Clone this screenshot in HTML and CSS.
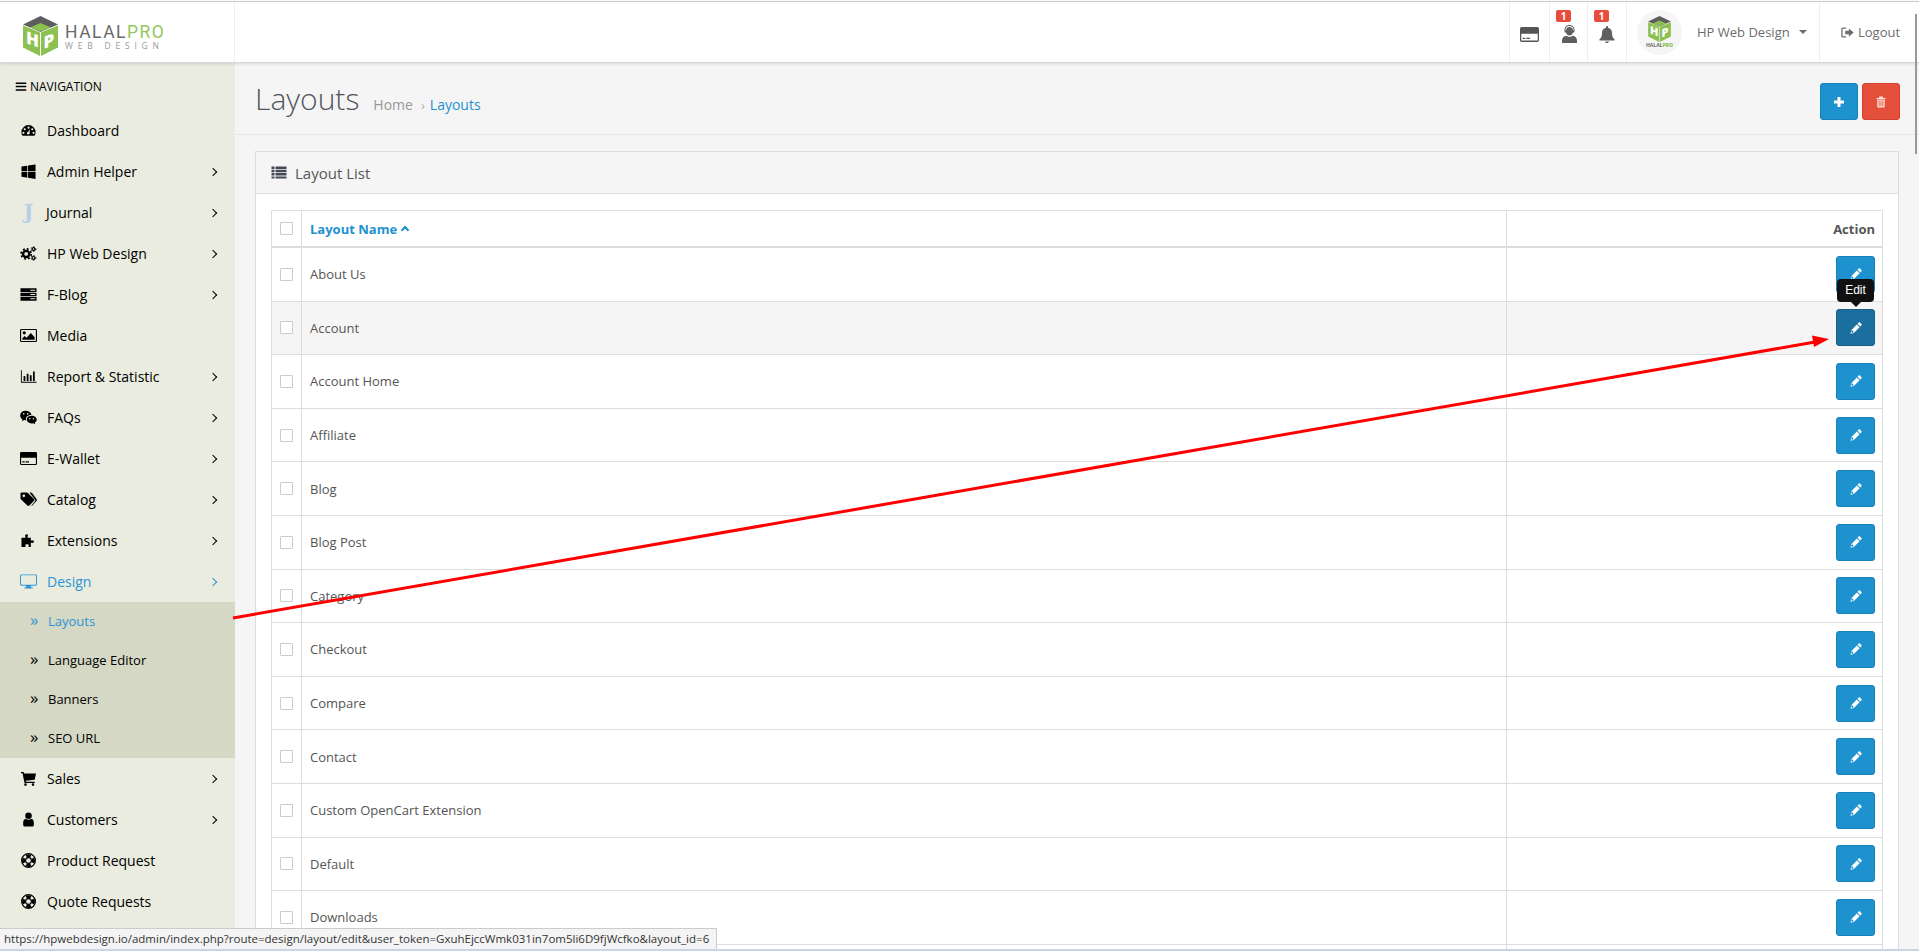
FILE: index.html
```html
<!DOCTYPE html>
<html lang="en">
<head>
<meta charset="utf-8">
<title>Layouts</title>
<link rel="stylesheet" href="styles.css">
</head>
<body>
<svg class="defs" width="0" height="0" aria-hidden="true">
  <symbol id="i-bars" viewBox="0 0 16 14"><path d="M1 1.5h14v2H1zM1 6h14v2H1zM1 10.500h14v2H1z"/></symbol>
  <symbol id="i-dash" viewBox="0 0 18 18"><path fill-rule="evenodd" d="M9 2.500a8.500 8.500 0 0 1 8.500 8.500c0 1.700-.4 3-1.300 4.300H1.800C.9 14 .5 12.700.5 11A8.500 8.500 0 0 1 9 2.500zM9 4.300a1.300 1.300 0 1 0 0 2.600 1.300 1.300 0 0 0 0-2.600zM4.500 6.200a1.300 1.300 0 1 0 0 2.600 1.300 1.300 0 0 0 0-2.600zM13.500 6.200a1.300 1.300 0 1 0 0 2.600 1.300 1.300 0 0 0 0-2.600zM2.900 10.500a1.300 1.300 0 1 0 0 2.600 1.300 1.300 0 0 0 0-2.600zM15.100 10.500a1.300 1.300 0 1 0 0 2.600 1.300 1.300 0 0 0 0-2.600zM11.200 7.200L8.700 10.400a1.700 1.700 0 1 0 1.500.7z"/></symbol>
  <symbol id="i-win" viewBox="0 0 16 16"><path d="M.5 2.700l6.200-.9v6H.5zM7.500 1.700l8-1.200v7.300h-8zM.5 8.600h6.200v6l-6.200-.9zM7.500 8.600h8v7.300l-8-1.200z"/></symbol>
  <symbol id="i-cogs" viewBox="0 0 18 16">
    <g class="icon-line">
      <circle cx="6.500" cy="8.500" r="3.300" stroke-width="2.600"/>
      <circle cx="6.500" cy="8.500" r="5.400" stroke-width="1.800" stroke-dasharray="2.100 2.140"/>
      <circle cx="14.300" cy="3.300" r="1.500" stroke-width="1.300"/>
      <circle cx="14.300" cy="3.300" r="2.500" stroke-width="1" stroke-dasharray="1.300 1.320"/>
      <circle cx="14.300" cy="12.700" r="1.500" stroke-width="1.300"/>
      <circle cx="14.300" cy="12.700" r="2.500" stroke-width="1" stroke-dasharray="1.300 1.320"/>
    </g>
  </symbol>
  <symbol id="i-server" viewBox="0 0 18 14"><path fill-rule="evenodd" d="M.5 .5h17v3.800H.5zM.5 5.100h17v3.800H.5zM.5 9.700h17v3.800H.5zM11 1.900v1h5v-1zM11 6.500v1h5v-1zM11 11.100v1h5v-1z"/></symbol>
  <symbol id="i-image" viewBox="0 0 18 14"><path fill-rule="evenodd" d="M1.500 0h15A1.500 1.500 0 0 1 18 1.500v11a1.500 1.500 0 0 1-1.500 1.500h-15A1.500 1.500 0 0 1 0 12.500v-11A1.500 1.500 0 0 1 1.500 0zM1.500 1.200a.3.300 0 0 0-.3.300v11c0 .2.100.3.3.3h15a.3.300 0 0 0 .3-.3v-11a.3.300 0 0 0-.3-.3zM4.500 2.500a1.700 1.700 0 1 1 0 3.400 1.700 1.700 0 0 1 0-3.400zM2.500 11.500v-1.700l2.500-2.300 2 2 4.500-5.200 4 4.500v2.700z"/></symbol>
  <symbol id="i-chart" viewBox="0 0 19 15"><path d="M1 .5h1v13h16.500v1H1zM4 7h2v5.500H4zM7.500 4.500h2v8h-2zM11 6h2v6.500h-2zM14.500 2h2v10.500h-2z"/></symbol>
  <symbol id="i-wechat" viewBox="0 0 19 16"><path fill-rule="evenodd" d="M6.500.5c3.300 0 6 2 6.300 4.700-3.300-.2-6.300 1.900-6.300 4.700 0 .5.100.9.200 1.300-.7 0-1.400-.1-2-.3L2.200 12.200l.6-2C1.300 9.100.2 7.500.2 5.700.2 2.800 3 .5 6.500.5zM4.200 3a.9.900 0 1 0 0 1.800.9.900 0 0 0 0-1.800zM8.600 3a.9.900 0 1 0 0 1.800A.9.900 0 0 0 8.600 3zM13 6c3.100 0 5.700 1.900 5.700 4.300 0 1.400-.9 2.600-2.100 3.400l.5 1.800-2-1.100c-.7.200-1.400.3-2.100.3-3.100 0-5.500-2-5.500-4.400S9.900 6 13 6zM11 8.500a.8.800 0 1 0 0 1.600.8.800 0 0 0 0-1.600zM15 8.500a.8.800 0 1 0 0 1.600.8.800 0 0 0 0-1.600z"/></symbol>
  <symbol id="i-card" viewBox="0 0 18 14"><path fill-rule="evenodd" d="M1.500 0h15A1.500 1.500 0 0 1 18 1.500v11a1.500 1.500 0 0 1-1.500 1.500h-15A1.500 1.500 0 0 1 0 12.500v-11A1.500 1.500 0 0 1 1.500 0zM1.200 6.200v6.300c0 .2.100.3.3.3h15c.2 0 .3-.1.300-.3V6.200zM2.500 10h2.500v1.200H2.500zM6 10h3.500v1.200H6z"/></symbol>
  <symbol id="i-tags" viewBox="0 0 18 16"><path fill-rule="evenodd" d="M1.500.5h5.500c.6 0 1.100.3 1.400.6l6.400 6.400c.6.600.6 1.500 0 2.100l-4.900 4.900c-.6.600-1.500.6-2.100 0L1.100 8.100C.7 7.700.5 7.200.5 6.700V1.500c0-.6.400-1 1-1zM4 2.700a1.400 1.400 0 1 0 0 2.800 1.400 1.400 0 0 0 0-2.800zM10 .5h1.500c.5 0 1 .2 1.300.6l4.700 6.400c.6.600.6 1.500 0 2.100l-4.300 4.900c-.4.400-1 .5-1.400.4l4-4.700c.6-.6.600-1.500 0-2.100z"/></symbol>
  <symbol id="i-puzzle" viewBox="0 0 16 16"><path d="M5.500 1.500c1-.6 1.900 0 1.900 1 0 .6-.4 1-.4 1.700V5h3.500v3c.5 0 .9-.4 1.500-.4 1.200 0 1.900.8 1.900 1.500s-.7 1.500-1.900 1.500c-.6 0-1-.4-1.500-.4V15H8c0-.6.300-1 .3-1.600 0-.9-.7-1.400-1.800-1.400s-1.900.5-1.900 1.400c0 .6.400 1 .4 1.600H.5V5h4.200v-.8c0-.7-.4-1.100-.4-1.700 0-.4.300-.8 1.200-1z"/></symbol>
  <symbol id="i-desktop" viewBox="0 0 18 15"><path fill-rule="evenodd" d="M1.500 0h15A1.500 1.500 0 0 1 18 1.500v9a1.500 1.500 0 0 1-1.500 1.500h-5.200l.5 1.800h1.700v1H4.500v-1h1.700l.5-1.800H1.500A1.500 1.500 0 0 1 0 10.500v-9A1.500 1.500 0 0 1 1.500 0zM1.500 1a.5.500 0 0 0-.5.500v9c0 .3.200.5.500.5h15c.3 0 .5-.2.500-.5v-9a.5.500 0 0 0-.5-.5z"/></symbol>
  <symbol id="i-cart" viewBox="0 0 16 15"><path d="M.5 1h2.700l.4 1.500H15.500l-1.300 6.200-9 1 .2 1h8.800v1.300H4l-2-9.700H.5zM5 12.300a1.300 1.300 0 1 1 0 2.600 1.300 1.300 0 0 1 0-2.600zM12.500 12.300a1.300 1.300 0 1 1 0 2.600 1.300 1.300 0 0 1 0-2.600z"/></symbol>
  <symbol id="i-user" viewBox="0 0 12 16"><path d="M6 .5a3.500 3.500 0 1 1 0 7 3.500 3.500 0 0 1 0-7zM3 7.200c.8.700 1.900 1 3 1s2.200-.3 3-1c1.700.2 2.700 1.800 2.700 4.300v2.300c0 .9-.7 1.700-1.700 1.700H2c-1 0-1.700-.8-1.700-1.700v-2.300c0-2.500 1-4.100 2.700-4.300z"/></symbol>
  <symbol id="i-ring" viewBox="0 0 16 16">
    <g class="icon-line">
      <circle cx="8" cy="8" r="7.300" stroke-width="1.400"/>
      <circle cx="8" cy="8" r="3.100" stroke-width="1.200"/>
      <circle cx="8" cy="8" r="5.200" stroke-width="3.200" pathLength="100" stroke-dasharray="16 9" stroke-dashoffset="8"/>
    </g>
  </symbol>
  <symbol id="i-pencil" viewBox="0 0 13 13"><path d="M9.400 .6c.4-.4 1-.4 1.400 0l1.600 1.600c.4.400.4 1 0 1.400l-1.300 1.300-3-3zM7.400 2.600l3 3-6.200 6.200-3.700.9.900-3.700zM1.700 9.300l-.4 1.500.9.900 1.500-.4-.2-1.800z"/></symbol>
  <symbol id="i-plus" viewBox="0 0 12 12"><path d="M4.500 1h3v3.500H11v3H7.500V11h-3V7.500H1v-3h3.500z"/></symbol>
  <symbol id="i-trash" viewBox="0 0 12 14"><path fill-rule="evenodd" d="M4 .5h4l.8 1.700H11.500v1.200H.5V2.200h2.700zM1.500 4h9v8.300c0 .7-.5 1.200-1.100 1.200H2.600c-.6 0-1.100-.5-1.100-1.200zM3.200 5.300v6.900h1V5.300zM5.500 5.300v6.900h1V5.300zM7.800 5.300v6.900h1V5.300z"/></symbol>
  <symbol id="i-signout" viewBox="0 0 14 12"><path fill-rule="evenodd" d="M2 .5h3.500v1.300H2.300c-.4 0-.7.300-.7.700v7c0 .4.300.7.700.7h3.200v1.300H2c-1 0-1.800-.8-1.800-1.800V2.300C.2 1.300 1 .5 2 .5zM8.500 1.500L13.700 6 8.500 10.500V8H4.500V4h4z"/></symbol>
  <symbol id="i-agent" viewBox="0 0 16 18"><path fill-rule="evenodd" d="M8 0c3 0 5 2.200 5 4.800v1.700c0 .6-.4 1-1 1h-.5C11 9.500 9.700 10.500 8 10.500S5 9.500 4.500 7.500H4c-.6 0-1-.4-1-1V4.800C3 2.200 5 0 8 0zM8 1C5.700 1 4 2.700 4 4.800v.7h.5c0-2 1.500-3.500 3.500-3.500s3.500 1.500 3.500 3.500h.5v-.7C12 2.700 10.300 1 8 1zM4.800 10.800c.9.700 2 1.200 3.200 1.200s2.300-.5 3.200-1.200c2.500.3 4.300 2.200 4.300 4.700V18H.5v-2.500c0-2.500 1.800-4.400 4.300-4.700z"/></symbol>
  <symbol id="i-bell" viewBox="0 0 16 17"><path d="M8 0c.6 0 1 .4 1 1v.7c2.600.5 4 2.500 4 5.300 0 3.500 1 5 2.500 6.300v1.200H.500v-1.200C2 12 3 10.500 3 7c0-2.800 1.400-4.800 4-5.300V1c0-.6.400-1 1-1zM6 15.500h4c0 .9-.9 1.500-2 1.500s-2-.6-2-1.500z"/></symbol>
  <symbol id="i-list" viewBox="0 0 16 13"><path d="M.5 .5h3v2.400h-3zM4.500 .5h11v2.400h-11zM.5 3.800h3v2.400h-3zM4.500 3.800h11v2.400h-11zM.5 7.100h3v2.400h-3zM4.500 7.100h11v2.400h-11zM.5 10.400h3v2.100h-3zM4.500 10.400h11v2.100h-11z"/></symbol>
</svg>

<div class="app">
  <header class="topbar">
    <a class="brand">
      <svg class="brand-cube" viewBox="0 0 35 40">
        <path class="cube-top" d="M17.500 0L35 8.500 17.500 16 0 8.500z"/>
        <path class="cube-inner" d="M17.500 7L28 11.500 17.500 15.500 7 11.500z"/>
        <path class="cube-side" d="M0 9.500l17 7V40L0 31.500zM35 9.500l-17 7V40l17-8.500z"/>
        <text class="cube-text" transform="translate(3 27) skewY(20)">H</text>
        <text class="cube-text" transform="translate(20.500 33) skewY(-20)">P</text>
      </svg>
      <span class="brand-text">
        <span class="brand-name">HALAL<b>PRO</b></span>
        <span class="brand-sub">WEB DESIGN</span>
      </span>
    </a>
    <div class="top-space"></div>
    <div class="top-cell w-card"><svg class="ti ti-card"><use href="#i-card"/></svg></div>
    <div class="top-cell w-agent"><span class="badge">1</span><svg class="ti ti-agent"><use href="#i-agent"/></svg></div>
    <div class="top-cell w-bell"><span class="badge">1</span><svg class="ti ti-bell"><use href="#i-bell"/></svg></div>
    <div class="top-cell w-user">
      <span class="avatar">
        <svg class="avatar-cube" viewBox="0 0 35 40">
          <path class="cube-top" d="M17.500 0L35 8.500 17.500 16 0 8.500z"/>
          <path class="cube-inner" d="M17.500 7L28 11.500 17.500 15.500 7 11.500z"/>
          <path class="cube-side" d="M0 9.500l17 7V40L0 31.500zM35 9.500l-17 7V40l17-8.500z"/>
          <text class="cube-text" transform="translate(3 27) skewY(20)">H</text>
          <text class="cube-text" transform="translate(20.500 33) skewY(-20)">P</text>
        </svg>
        <span class="avatar-name">HALAL<b>PRO</b></span>
      </span>
      <span class="user-name">HP Web Design</span>
      <span class="caret"></span>
    </div>
    <div class="top-cell w-logout"><svg class="ti ti-out"><use href="#i-signout"/></svg><span>Logout</span></div>
  </header>

  <div class="body">
    <nav class="side">
      <div class="side-title"><svg class="bars"><use href="#i-bars"/></svg>NAVIGATION</div>
      <a class="nav"><svg class="ni"><use href="#i-dash"/></svg><span class="nt">Dashboard</span></a>
      <a class="nav"><svg class="ni"><use href="#i-win"/></svg><span class="nt">Admin Helper</span><i class="chev"></i></a>
      <a class="nav"><span class="ni j-icon">J</span><span class="nt nt-j">Journal</span><i class="chev"></i></a>
      <a class="nav"><svg class="ni"><use href="#i-cogs"/></svg><span class="nt">HP Web Design</span><i class="chev"></i></a>
      <a class="nav"><svg class="ni"><use href="#i-server"/></svg><span class="nt">F-Blog</span><i class="chev"></i></a>
      <a class="nav"><svg class="ni"><use href="#i-image"/></svg><span class="nt">Media</span></a>
      <a class="nav"><svg class="ni"><use href="#i-chart"/></svg><span class="nt">Report &amp; Statistic</span><i class="chev"></i></a>
      <a class="nav"><svg class="ni"><use href="#i-wechat"/></svg><span class="nt">FAQs</span><i class="chev"></i></a>
      <a class="nav"><svg class="ni"><use href="#i-card"/></svg><span class="nt">E-Wallet</span><i class="chev"></i></a>
      <a class="nav"><svg class="ni"><use href="#i-tags"/></svg><span class="nt">Catalog</span><i class="chev"></i></a>
      <a class="nav"><svg class="ni"><use href="#i-puzzle"/></svg><span class="nt">Extensions</span><i class="chev"></i></a>
      <a class="nav active"><svg class="ni"><use href="#i-desktop"/></svg><span class="nt">Design</span><i class="chev"></i></a>
      <div class="sub">
        <a class="sub-item active"><span class="dbl">»</span>Layouts</a>
        <a class="sub-item"><span class="dbl">»</span>Language Editor</a>
        <a class="sub-item"><span class="dbl">»</span>Banners</a>
        <a class="sub-item"><span class="dbl">»</span>SEO URL</a>
      </div>
      <a class="nav"><svg class="ni"><use href="#i-cart"/></svg><span class="nt">Sales</span><i class="chev"></i></a>
      <a class="nav"><svg class="ni"><use href="#i-user"/></svg><span class="nt">Customers</span><i class="chev"></i></a>
      <a class="nav"><svg class="ni"><use href="#i-ring"/></svg><span class="nt">Product Request</span></a>
      <a class="nav"><svg class="ni"><use href="#i-ring"/></svg><span class="nt">Quote Requests</span></a>
    </nav>

    <main class="main">
      <div class="page-head">
        <h1>Layouts</h1>
        <span class="crumb">Home</span>
        <span class="crumb-sep">›</span>
        <span class="crumb-cur">Layouts</span>
        <div class="head-actions">
          <a class="btn btn-blue btn-head"><svg class="bi-plus"><use href="#i-plus"/></svg></a>
          <a class="btn btn-red btn-head"><svg class="bi-trash"><use href="#i-trash"/></svg></a>
        </div>
      </div>
      <section class="panel">
        <div class="panel-head"><svg class="list-i"><use href="#i-list"/></svg>Layout List</div>
        <div class="panel-body">
          <div class="table">
            <div class="row row-head">
              <div class="cell c-check"><span class="check"></span></div>
              <div class="cell c-name sort">Layout Name <i class="up"></i></div>
              <div class="cell c-act act-title">Action</div>
            </div>
            <div class="row"><div class="cell c-check"><span class="check"></span></div><div class="cell c-name">About Us</div><div class="cell c-act"><a class="btn btn-blue btn-edit"><svg class="bi-pen"><use href="#i-pencil"/></svg></a></div></div>
            <div class="row row-hover"><div class="cell c-check"><span class="check"></span></div><div class="cell c-name">Account</div><div class="cell c-act"><a class="btn btn-dark btn-edit"><span class="tip">Edit</span><svg class="bi-pen"><use href="#i-pencil"/></svg></a></div></div>
            <div class="row"><div class="cell c-check"><span class="check"></span></div><div class="cell c-name">Account Home</div><div class="cell c-act"><a class="btn btn-blue btn-edit"><svg class="bi-pen"><use href="#i-pencil"/></svg></a></div></div>
            <div class="row"><div class="cell c-check"><span class="check"></span></div><div class="cell c-name">Affiliate</div><div class="cell c-act"><a class="btn btn-blue btn-edit"><svg class="bi-pen"><use href="#i-pencil"/></svg></a></div></div>
            <div class="row"><div class="cell c-check"><span class="check"></span></div><div class="cell c-name">Blog</div><div class="cell c-act"><a class="btn btn-blue btn-edit"><svg class="bi-pen"><use href="#i-pencil"/></svg></a></div></div>
            <div class="row"><div class="cell c-check"><span class="check"></span></div><div class="cell c-name">Blog Post</div><div class="cell c-act"><a class="btn btn-blue btn-edit"><svg class="bi-pen"><use href="#i-pencil"/></svg></a></div></div>
            <div class="row"><div class="cell c-check"><span class="check"></span></div><div class="cell c-name">Category</div><div class="cell c-act"><a class="btn btn-blue btn-edit"><svg class="bi-pen"><use href="#i-pencil"/></svg></a></div></div>
            <div class="row"><div class="cell c-check"><span class="check"></span></div><div class="cell c-name">Checkout</div><div class="cell c-act"><a class="btn btn-blue btn-edit"><svg class="bi-pen"><use href="#i-pencil"/></svg></a></div></div>
            <div class="row"><div class="cell c-check"><span class="check"></span></div><div class="cell c-name">Compare</div><div class="cell c-act"><a class="btn btn-blue btn-edit"><svg class="bi-pen"><use href="#i-pencil"/></svg></a></div></div>
            <div class="row"><div class="cell c-check"><span class="check"></span></div><div class="cell c-name">Contact</div><div class="cell c-act"><a class="btn btn-blue btn-edit"><svg class="bi-pen"><use href="#i-pencil"/></svg></a></div></div>
            <div class="row"><div class="cell c-check"><span class="check"></span></div><div class="cell c-name">Custom OpenCart Extension</div><div class="cell c-act"><a class="btn btn-blue btn-edit"><svg class="bi-pen"><use href="#i-pencil"/></svg></a></div></div>
            <div class="row"><div class="cell c-check"><span class="check"></span></div><div class="cell c-name">Default</div><div class="cell c-act"><a class="btn btn-blue btn-edit"><svg class="bi-pen"><use href="#i-pencil"/></svg></a></div></div>
            <div class="row"><div class="cell c-check"><span class="check"></span></div><div class="cell c-name">Downloads</div><div class="cell c-act"><a class="btn btn-blue btn-edit"><svg class="bi-pen"><use href="#i-pencil"/></svg></a></div></div>
            <div class="row"><div class="cell c-check"></div><div class="cell c-name"></div><div class="cell c-act"></div></div>
          </div>
        </div>
      </section>
    </main>
  </div>
  <div class="edge"></div>

  <svg class="arrow" viewBox="0 0 1919 951" aria-hidden="true">
    <line x1="233" y1="618" x2="1815" y2="342" class="arrow-line"/>
    <path class="arrow-head" d="M1829 339L1812 335.500 1814 347z"/>
  </svg>
  <div class="scroll-mark"></div>
  <div class="status">https://hpwebdesign.io/admin/index.php?route=design/layout/edit&amp;user_token=GxuhEjccWmk031in7om5li6D9fjWcfko&amp;layout_id=6</div>
</div>
</body>
</html>
```
FILE: styles.css
```css
* { box-sizing: border-box; }
html, body { margin: 0; height: 100%; background: #fff; }
body { font-family: "Open Sans", "Noto Sans", sans-serif; font-size: 13px; color: #555; overflow: hidden; }
.defs { position: absolute; }
svg { fill: currentColor; display: block; }
a { color: inherit; text-decoration: none; }
.icon-line { fill: none; stroke: currentColor; }

.app { position: relative; height: 951px; padding-top: 1px; display: flex; flex-direction: column; overflow: hidden; }

/* top bar */
.topbar { height: 62px; flex: none; display: flex; background: #fff; border-top: 1px solid #ccc; border-bottom: 1px solid #d8d8d8; box-shadow: 0 1px 3px rgba(0,0,0,.12); position: relative; z-index: 2; color: #6d6d6d; }
.brand { width: 235px; flex: none; display: flex; align-items: flex-start; gap: 7px; padding: 14px 0 0 23px; border-right: 1px solid #eee; }
.brand-cube { width: 35px; height: 40px; flex: none; }
.cube-top { fill: #5d5d5d; }
.cube-inner { fill: #8cc152; }
.cube-side { fill: #8cc152; }
.cube-text { fill: #fff; font: 800 17px "Open Sans", sans-serif; }
.brand-text { display: flex; flex-direction: column; margin-top: 8px; }
.brand-name { font: 400 17.500px/17px "Roboto", sans-serif; color: #6a6a6a; letter-spacing: 1.500px; }
.brand-name b { font-weight: 400; color: #92c85a; }
.brand-sub { font: 400 8.500px/10px "Open Sans", sans-serif; color: #9a9a9a; letter-spacing: 4.800px; margin-top: 0; white-space: nowrap; }
.top-space { flex: 1; }
.top-cell { flex: none; position: relative; display: flex; align-items: center; justify-content: center; border-left: 1px solid #eee; }
.w-card { width: 40px; }
.w-agent { width: 38px; }
.w-bell { width: 39px; }
.w-user { width: 193px; justify-content: flex-start; padding-left: 10px; }
.w-logout { width: 100px; justify-content: flex-start; padding-left: 21px; gap: 4px; font-size: 13px; }
.ti { color: #5f5f5f; }
.ti-card { width: 19px; height: 15px; color: #555; position: relative; top: 2px; }
.ti-agent { width: 17px; height: 18px; position: relative; top: 2px; left: 1px; }
.ti-bell { width: 16px; height: 17px; position: relative; top: 2px; }
.ti-out { width: 13px; height: 11px; color: #6d6d6d; }
.badge { position: absolute; left: 6px; top: 8px; width: 15px; height: 12px; border-radius: 2px; background: #e74c3c; color: #fff; font: 700 10px/12px "Open Sans", sans-serif; text-align: center; }
.avatar { width: 45px; height: 45px; border-radius: 50%; background: #f5f5f5; display: flex; flex-direction: column; align-items: center; padding-top: 6px; flex: none; }
.avatar-cube { width: 23px; height: 26px; flex: none; }
.avatar-name { font: 700 5px/6px "Open Sans", sans-serif; color: #666; }
.avatar-name b { color: #8cc152; }
.user-name { margin-left: 15px; font-size: 13px; }
.caret { margin-left: 9px; border: 4px solid transparent; border-top: 4px solid #6d6d6d; border-bottom: 0; }

/* sidebar */
.body { flex: 1; min-height: 0; display: flex; }
.side { width: 235px; flex: none; background: #e9ecdf; color: #000; display: flex; flex-direction: column; font-size: 14px; overflow: hidden; }
.side-title { height: 47px; flex: none; display: flex; align-items: center; padding: 0 0 0 15px; font-size: 12px; gap: 3px; }
.bars { width: 12px; height: 11px; }
.nav { height: 41px; flex: none; display: flex; align-items: center; padding-left: 20px; position: relative; }
.ni { width: 17px; height: 15px; flex: none; }
.j-icon { font: 700 20px/15px "DejaVu Serif", serif; color: #b7cfe6; text-align: center; }
.nt { margin-left: 10px; white-space: nowrap; }
.nt-j { margin-left: 9px; }
.chev { position: absolute; left: 210px; top: 18px; width: 6px; height: 6px; border: solid currentColor; border-width: 1.500px 1.500px 0 0; transform: rotate(45deg); }
.nav.active { color: #2a94d6; }
.sub { flex: none; background: #d5d8c5; height: 156px; display: flex; flex-direction: column; }
.sub-item { height: 39px; flex: none; display: flex; align-items: center; padding: 0 0 2px 30px; font-size: 13px; }
.sub-item.active { color: #2a94d6; }
.dbl { width: 18px; font-size: 17px; font-weight: 400; line-height: 1; position: relative; top: -1px; }

/* main */
.main { flex: 1; min-width: 0; background: #f5f5f5; display: flex; flex-direction: column; overflow: hidden; }
.page-head { height: 72px; flex: none; display: flex; align-items: baseline; padding: 21px 19px 0 20px; border-bottom: 1px solid #e8e8e8; }
h1 { margin: 0; font-size: 30px; font-weight: 300; color: #4f5560; line-height: 1; }
.crumb { margin-left: 14px; color: #999; font-size: 14px; }
.crumb-sep { margin: 0 5px 0 8px; color: #aaa; font-size: 13px; }
.crumb-cur { color: #1e91cf; font-size: 14px; }
.head-actions { margin: -1px 0 0 auto; display: flex; gap: 4px; align-self: flex-start; }
.btn { display: flex; align-items: center; justify-content: center; border-radius: 3px; color: #fff; position: relative; }
.btn-head { width: 38px; height: 37px; }
.btn-blue { background: #1e91cf; border: 1px solid #1a80b8; }
.btn-red { background: #e4503a; border: 1px solid #d4432f; }
.btn-dark { background: #1b6f9e; border: 1px solid #175f88; }
.bi-plus { width: 12px; height: 12px; }
.bi-trash { width: 10px; height: 12px; color: #ffdcd8; }
.bi-pen { width: 12px; height: 12px; }

.panel { flex: 1; margin: 16px 20px 0; background: #fff; border: 1px solid #ddd; border-bottom: 0; min-height: 0; overflow: hidden; }
.panel-head { height: 42px; background: #f5f5f5; border-bottom: 1px solid #ddd; display: flex; align-items: center; padding-left: 15px; font-size: 15px; color: #555; gap: 8px; }
.list-i { width: 16px; height: 13px; color: #444a55; }
.panel-body { padding: 16px 15px 0; }
.table { border: 1px solid #ddd; border-bottom: 0; }
.row { display: grid; grid-template-columns: 29px 1205px 1fr; height: 53.600px; border-bottom: 1px solid #ddd; }
.row-head { height: 37px; border-bottom-width: 2px; }
.row-hover { background: #f5f5f5; }
.cell { display: flex; align-items: center; padding: 0 7px 0 8px; min-width: 0; }
.cell + .cell { border-left: 1px solid #ddd; }
.c-check { padding: 0 0 0 8px; }
.c-name { padding-left: 8px; color: #555; }
.c-act { justify-content: flex-end; }
.check { width: 13px; height: 13px; border: 1px solid #ccc; background: #fff; border-radius: 1px; }
.sort { color: #1e91cf; font-weight: 700; gap: 4px; }
.up { width: 6px; height: 6px; border: solid #1e91cf; border-width: 2px 0 0 2px; transform: rotate(45deg); margin: 3px 0 0 1px; }
.act-title { font-weight: 700; }
.btn-edit { width: 39px; height: 37px; }
.tip { position: absolute; left: 0; top: -31px; width: 37px; height: 23px; background: #111; color: #fff; font: 400 12px/23px "Liberation Sans", sans-serif; text-align: center; border-radius: 4px; z-index: 3; }
.tip::after { content: ""; position: absolute; left: 14px; top: 23px; border: 5px solid transparent; border-top-color: #111; border-bottom: 0; }

/* overlays */
.edge { height: 2px; flex: none; background: #c6d6e6; position: relative; z-index: 2; }
.arrow { position: absolute; left: 0; top: 0; width: 1919px; height: 951px; pointer-events: none; z-index: 4; }
.arrow-line { stroke: #f00; stroke-width: 3; }
.arrow-head { fill: #f00; }
.scroll-mark { position: absolute; left: 1915px; top: 14px; width: 2px; height: 140px; background: #999; z-index: 3; }
.status { position: absolute; left: 0; top: 928px; width: 717px; height: 21px; background: #f4f4f4; border: 1px solid #ccc; border-width: 1px 1px 0 0; padding: 0 0 0 4px; font: 400 11.500px/20px "Open Sans", sans-serif; color: #333; white-space: nowrap; overflow: hidden; z-index: 5; }
```
